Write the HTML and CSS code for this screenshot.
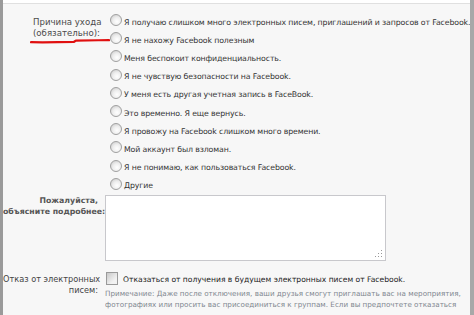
FILE: index.html
```html
<!DOCTYPE html>
<html>
<head>
<meta charset="utf-8">
<link rel="stylesheet" href="styles.css">
</head>
<body>
<div class="frame">
  <div class="topline"></div>
  <div class="form">
    <div class="row reason">
      <div class="label">Причина ухода<br>(обязательно):
        <svg class="mark" width="80" height="6" viewBox="0 0 80 6"><path d="M1 4.2 C15 4.4 30 4.2 44 3.8 L46 2.6 C58 2.4 68 2.3 79 2.1" stroke="#e01010" stroke-width="2.2" fill="none" stroke-linecap="round"/></svg>
      </div>
      <div class="field options">
        <div class="opt"><span class="radio"></span>Я получаю слишком много электронных писем, приглашений и запросов от Facebook.</div>
        <div class="opt"><span class="radio"></span>Я не нахожу Facebook полезным</div>
        <div class="opt"><span class="radio"></span>Меня беспокоит конфиденциальность.</div>
        <div class="opt"><span class="radio"></span>Я не чувствую безопасности на Facebook.</div>
        <div class="opt"><span class="radio"></span>У меня есть другая учетная запись в FaceBook.</div>
        <div class="opt"><span class="radio"></span>Это временно. Я еще вернусь.</div>
        <div class="opt"><span class="radio"></span>Я провожу на Facebook слишком много времени.</div>
        <div class="opt"><span class="radio"></span>Мой аккаунт был взломан.</div>
        <div class="opt"><span class="radio"></span>Я не понимаю, как пользоваться Facebook.</div>
        <div class="opt"><span class="radio"></span>Другие</div>
      </div>
    </div>
    <div class="row explain">
      <div class="label">Пожалуйста,<br>объясните подробнее:</div>
      <div class="field"><div class="textarea"><span class="grip"></span></div></div>
    </div>
    <div class="row optout">
      <div class="label">Отказ от электронных<br>писем:</div>
      <div class="field">
        <div class="check-line"><span class="checkbox"></span>Отказаться от получения в будущем электронных писем от Facebook.</div>
        <div class="notes">
          <div class="note">Примечание: Даже после отключения, ваши друзья смогут приглашать вас на мероприятия,</div>
          <div class="note">фотографиях или просить вас присоединиться к группам. Если вы предпочтете отказаться</div>
        </div>
      </div>
    </div>
  </div>
</div>
</body>
</html>
```

FILE: styles.css
```css
html, body {
  margin: 0;
  padding: 0;
  background: #ffffff;
}
.frame {
  width: 474px;
  height: 315px;
  box-sizing: border-box;
  border-left: 3px solid #9a9a9a;
  border-right: 4px solid #a8a8a8;
  background: #f7f7f7;
  overflow: hidden;
  font-family: "DejaVu Sans", Verdana, sans-serif;
  font-size: 7.8px;
  color: #333;
}
.topline {
  height: 3px;
  background: #fff;
  border-bottom: 1px solid #e0e0e0;
}
.form {
  display: flex;
  flex-direction: column;
}
.row {
  display: grid;
  grid-template-columns: 95px 1fr;
  column-gap: 7px;
}
.label {
  position: relative;
  text-align: right;
  line-height: 11px;
  color: #444;
  white-space: nowrap;
}
.reason { padding-top: 9px; }
.reason .label {
  padding-top: 4px;
  padding-left: 30px;
  text-align: left;
  font-size: 8.6px;
  color: #4a4a4a;
}
.mark {
  position: absolute;
  left: 27px;
  top: 25px;
}
.options {
  display: flex;
  flex-direction: column;
  padding-left: 5px;
}
.opt {
  display: flex;
  align-items: center;
  height: 18.2px;
  white-space: nowrap;
  color: #333;
  letter-spacing: -0.12px;
}
.radio {
  width: 12px;
  height: 12px;
  border-radius: 50%;
  border: 1px solid #a0a0a0;
  box-sizing: border-box;
  background: radial-gradient(circle at 60% 65%, #ffffff 0%, #eeeeee 45%, #c4c4c4 100%);
  margin-right: 2px;
  flex: none;
  position: relative;
  top: -2px;
}
.explain .label {
  font-size: 7.8px;
  font-weight: bold;
  color: #555;
  padding-top: 0;
}
.textarea {
  position: relative;
  width: 281px;
  height: 66px;
  box-sizing: border-box;
  border: 1px solid #c8c8cc;
  background: #fff;
}
.grip {
  position: absolute;
  right: 3px;
  bottom: 3px;
  width: 8px;
  height: 8px;
  background-image: radial-gradient(circle, #999 0.8px, transparent 1px);
  background-size: 3px 3px;
  clip-path: polygon(100% 0, 100% 100%, 0 100%);
}
.optout { margin-top: 11px; }
.optout .label {
  padding-top: 2px;
  font-size: 8.2px;
  color: #444;
}
.check-line {
  display: flex;
  align-items: flex-end;
  white-space: nowrap;
  color: #222;
  font-size: 7.6px;
  line-height: 10px;
  padding-left: 1px;
}
.checkbox {
  width: 12px;
  height: 13px;
  box-sizing: border-box;
  border: 1px solid #9a9a9a;
  background: linear-gradient(135deg, #c8c8c8, #f2f2f2 70%);
  margin-right: 5px;
  flex: none;
}
.notes {
  margin-top: 3px;
  overflow: hidden;
}
.note {
  white-space: nowrap;
  color: #7f8790;
  font-size: 7.2px;
  line-height: 11.5px;
}
```
